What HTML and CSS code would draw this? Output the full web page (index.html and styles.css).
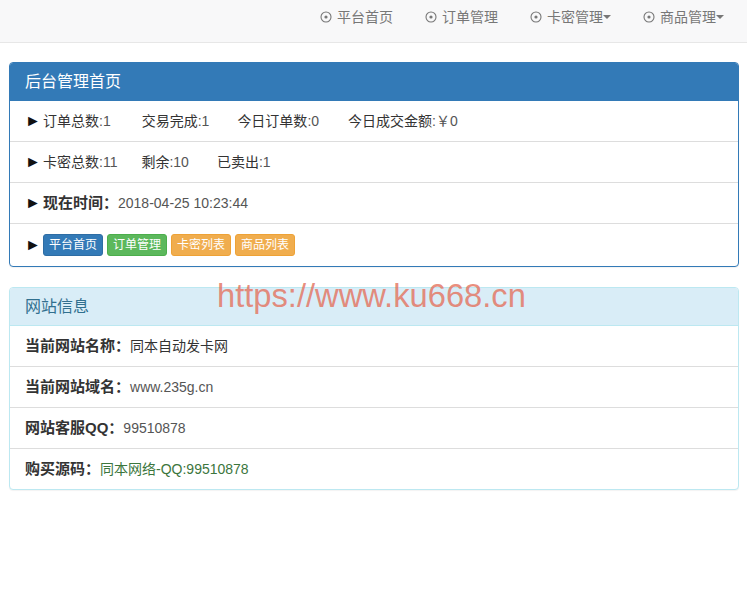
FILE: index.html
```html
<!DOCTYPE html>
<html lang="zh-CN">
<head>
<meta charset="utf-8">
<title>后台管理首页</title>
<link rel="stylesheet" href="styles.css">
</head>
<body>
<nav class="navbar">
  <ul class="nav">
    <li><a href="#"><svg class="icon" viewBox="0 0 12 12"><circle cx="6" cy="6" r="5" fill="none" stroke="#777" stroke-width="1.1"/><circle cx="6" cy="6" r="1.6" fill="#777"/></svg>平台首页</a></li>
    <li><a href="#"><svg class="icon" viewBox="0 0 12 12"><circle cx="6" cy="6" r="5" fill="none" stroke="#777" stroke-width="1.1"/><circle cx="6" cy="6" r="1.6" fill="#777"/></svg>订单管理</a></li>
    <li><a href="#"><svg class="icon" viewBox="0 0 12 12"><circle cx="6" cy="6" r="5" fill="none" stroke="#777" stroke-width="1.1"/><circle cx="6" cy="6" r="1.6" fill="#777"/></svg>卡密管理<span class="caret"></span></a></li>
    <li><a href="#"><svg class="icon" viewBox="0 0 12 12"><circle cx="6" cy="6" r="5" fill="none" stroke="#777" stroke-width="1.1"/><circle cx="6" cy="6" r="1.6" fill="#777"/></svg>商品管理<span class="caret"></span></a></li>
  </ul>
</nav>
<main class="container">
  <section class="panel panel-primary">
    <div class="panel-heading"><h3 class="panel-title">后台管理首页</h3></div>
    <ul class="list-group">
      <li class="list-item"><span class="arrow">►</span><span class="stat s1">订单总数<span class="num">:1</span></span><span class="stat s2">交易完成<span class="num">:1</span></span><span class="stat s3">今日订单数<span class="num">:0</span></span><span class="stat">今日成交金额<span class="num">:￥0</span></span></li>
      <li class="list-item"><span class="arrow">►</span><span class="stat s4">卡密总数<span class="num">:11</span></span><span class="stat s2">剩余<span class="num">:10</span></span><span class="stat">已卖出<span class="num">:1</span></span></li>
      <li class="list-item"><span class="arrow">►</span><b class="label">现在时间：</b><span class="num">2018-04-25 10:23:44</span></li>
      <li class="list-item buttons"><span class="arrow">►</span><a class="btn btn-primary" href="#">平台首页</a><a class="btn btn-success" href="#">订单管理</a><a class="btn btn-warning" href="#">卡密列表</a><a class="btn btn-warning" href="#">商品列表</a></li>
    </ul>
  </section>
  <section class="panel panel-info">
    <div class="panel-heading"><h3 class="panel-title">网站信息</h3></div>
    <ul class="list-group">
      <li class="list-item"><b class="label">当前网站名称：</b>同本自动发卡网</li>
      <li class="list-item"><b class="label">当前网站域名：</b><span class="num">www.235g.cn</span></li>
      <li class="list-item"><b class="label">网站客服QQ：</b><span class="num">99510878</span></li>
      <li class="list-item"><b class="label">购买源码：</b><span class="success">同本网络-QQ:99510878</span></li>
    </ul>
  </section>
  <div class="watermark">https://www.ku668.cn</div>
</main>
</body>
</html>
```
FILE: styles.css
```css
* { box-sizing: border-box; }
html, body { margin: 0; padding: 0; background: #fff; }
body {
  font-family: "Liberation Sans", "Noto Sans CJK SC", sans-serif;
  font-size: 14px;
  line-height: 20px;
  color: #333;
}
.navbar {
  background: #f8f8f9;
  border-bottom: 1px solid #e7e7e7;
  height: 43px;
  display: flex;
  justify-content: flex-end;
  padding-right: 7px;
}
.nav {
  list-style: none;
  margin: 0;
  padding: 0;
  display: flex;
}
.nav a {
  display: flex;
  align-items: center;
  padding: 0 16px;
  height: 34px;
  color: #777;
  text-decoration: none;
  font-size: 14px;
}
.icon { width: 12px; height: 12px; margin-right: 5px; }
.caret {
  display: inline-block;
  width: 0; height: 0;
  border-top: 4px solid #777;
  border-left: 4px solid transparent;
  border-right: 4px solid transparent;
}
.container {
  position: relative;
  padding: 19px 8px 0 9px;
}
.panel {
  border: 1px solid transparent;
  border-radius: 4px;
  margin-bottom: 20px;
  background: #fff;
  box-shadow: 0 1px 1px rgba(0,0,0,0.05);
}
.panel-primary { border-color: #337ab7; }
.panel-info { border-color: #bce8f1; }
.panel-heading {
  padding: 10px 15px;
  border-bottom: 1px solid transparent;
  border-radius: 3px 3px 0 0;
}
.panel-primary .panel-heading { background: #337ab7; color: #fff; border-color: #337ab7; }
.panel-info .panel-heading { background: #d9edf7; color: #31708f; border-color: #bce8f1; }
.panel-title {
  margin: 0;
  font-size: 16px;
  font-weight: normal;
  line-height: 17px;
}
.list-group { list-style: none; margin: 0; padding: 0; }
.list-item {
  padding: 0 15px;
  border-top: 1px solid #ddd;
  display: flex;
  align-items: center;
  height: 41px;
}
.list-item:first-child { border-top: 0; height: 40px; }
.list-item.buttons { height: 43px; }
.arrow { font-size: 16px; margin-right: 3px; color: #111; width: 15px; flex: none; }
.s1 { margin-right: 31px; }
.s2 { margin-right: 28px; }
.s3 { margin-right: 29px; }
.s4 { margin-right: 24px; }
.num { color: #555; }
.label { font-weight: bold; color: #333; font-size: 15px; }
.success { color: #3c763d; }
.buttons { gap: 4px; }
.buttons .arrow { margin-right: -1px; }
.btn {
  display: inline-block;
  padding: 1px 5px;
  font-size: 12px;
  line-height: 18px;
  border-radius: 3px;
  border: 1px solid transparent;
  color: #fff;
  text-decoration: none;
}
.btn-primary { background: #337ab7; border-color: #2e6da4; }
.btn-success { background: #5cb85c; border-color: #4cae4c; }
.btn-warning { background: #f0ad4e; border-color: #eea236; }
.watermark {
  position: absolute;
  left: 217px;
  top: 235px;
  font-size: 32.7px;
  line-height: 36px;
  color: rgba(228, 112, 92, 0.8);
  pointer-events: none;
}
```
